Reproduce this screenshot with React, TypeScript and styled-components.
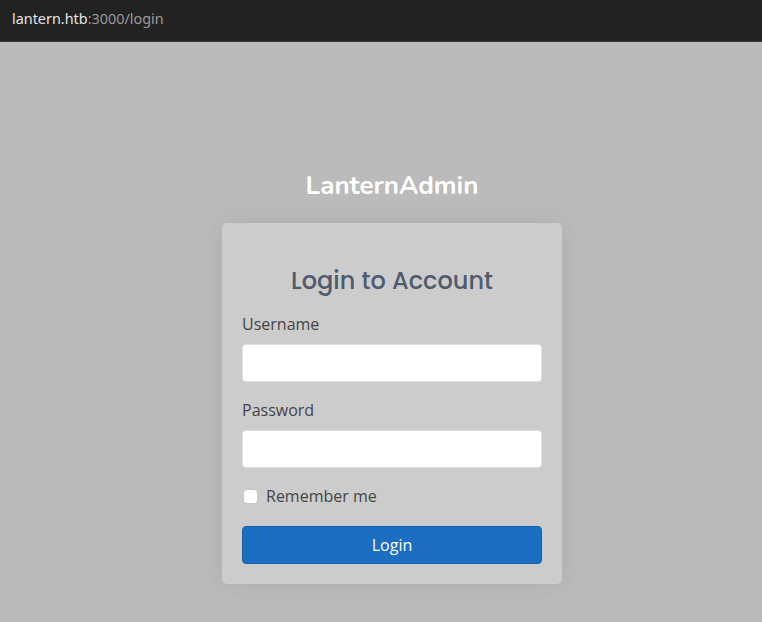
import React from "react";
import styled, { createGlobalStyle } from "styled-components";

const GlobalStyle = createGlobalStyle`
  html, body {
    margin: 0;
    padding: 0;
    background: #bbbbbb;
    font-family: "Open Sans", "Noto Sans", sans-serif;
  }
  * {
    box-sizing: border-box;
  }
`;

const Page = styled.div`
  display: flex;
  flex-direction: column;
  min-height: 622px;
`;

const AddressBar = styled.div`
  height: 42px;
  background: #222222;
  border-bottom: 1px solid #3a3a3a;
  display: flex;
  align-items: center;
  padding: 0 12px 4px;
  font-family: "Noto Sans", "Open Sans", sans-serif;
  font-size: 14.4px;
`;

const Host = styled.span`
  color: #e4e4e4;
`;

const PathPart = styled.span`
  color: #9a9a9a;
`;

const Main = styled.main`
  flex: 1;
  display: flex;
  flex-direction: column;
  align-items: center;
  padding: 129px 0 0 22px;
`;

const Brand = styled.h1`
  margin: 0 0 22px;
  font-family: "Nunito", "Lato", "Inter", sans-serif;
  font-weight: 700;
  font-size: 26px;
  line-height: 30px;
  color: #ffffff;
`;

const Card = styled.div`
  width: 340px;
  background: #cccccc;
  border-radius: 5px;
  padding: 43px 20px 20px;
  box-shadow: 0 0 24px rgba(0, 0, 0, 0.08);
  display: flex;
  flex-direction: column;
`;

const CardTitle = styled.h2`
  margin: 0 0 16px;
  text-align: center;
  font-family: "Poppins", "Inter", "Noto Sans", sans-serif;
  font-weight: 500;
  font-size: 24px;
  line-height: 30px;
  color: #4f5a6e;
`;

const Label = styled.label`
  display: block;
  font-size: 16px;
  line-height: 24px;
  color: #444444;
  margin-bottom: 8px;
`;

const Input = styled.input`
  display: block;
  width: 100%;
  height: 38px;
  background: #ffffff;
  border: 1px solid #dee2e6;
  border-radius: 4px;
  padding: 6px 12px;
  font-size: 16px;
  margin-bottom: 16px;
`;

const CheckRow = styled.div`
  display: flex;
  align-items: center;
  gap: 8px;
  height: 24px;
  margin-bottom: 18px;
  padding-left: 1px;
`;

const Check = styled.span`
  width: 15px;
  height: 15px;
  background: #ffffff;
  border: 1px solid #c8c8c8;
  border-radius: 4px;
`;

const CheckLabel = styled.span`
  font-size: 16px;
  color: #444444;
`;

const Button = styled.button`
  height: 38px;
  width: 100%;
  background: #1b6ec2;
  border: 1px solid #1861ac;
  border-radius: 4px;
  color: #ffffff;
  font-family: "Open Sans", "Noto Sans", sans-serif;
  font-size: 16px;
  cursor: pointer;
`;

const App: React.FC = () => {
  return (
    <Page>
      <GlobalStyle />
      <AddressBar>
        <Host>lantern.htb</Host>
        <PathPart>:3000/login</PathPart>
      </AddressBar>
      <Main>
        <Brand>LanternAdmin</Brand>
        <Card>
          <CardTitle>Login to Account</CardTitle>
          <Label>Username</Label>
          <Input type="text" />
          <Label>Password</Label>
          <Input type="password" />
          <CheckRow>
            <Check />
            <CheckLabel>Remember me</CheckLabel>
          </CheckRow>
          <Button>Login</Button>
        </Card>
      </Main>
    </Page>
  );
};

export default App;
